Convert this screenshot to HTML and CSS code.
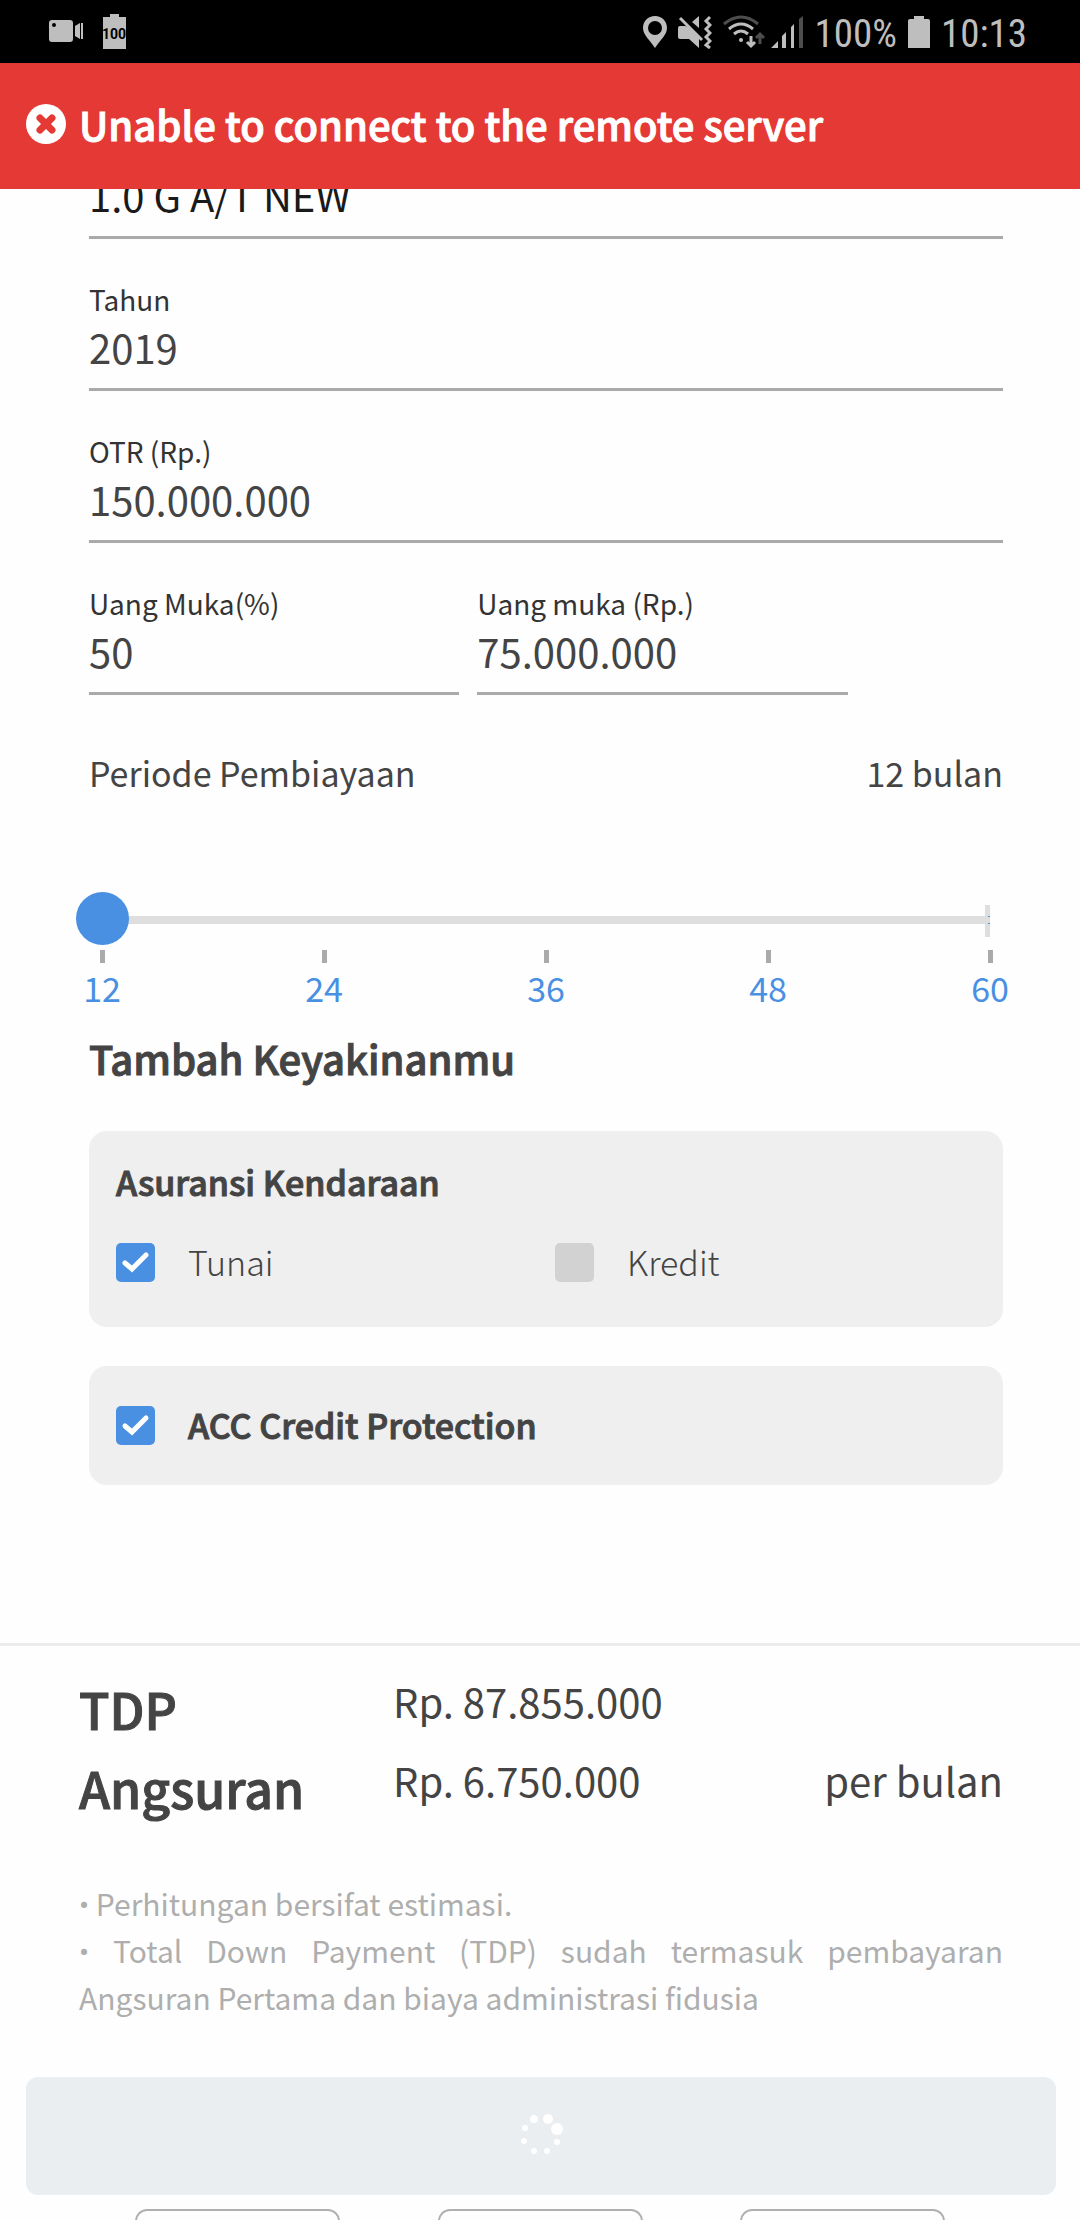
FILE: index.html
```html
<!DOCTYPE html>
<html lang="id">
<head>
<meta charset="utf-8">
<meta name="viewport" content="width=device-width, initial-scale=1">
<title>Simulasi Kredit</title>
<link rel="stylesheet" href="styles.css">
</head>
<body>
<div class="screen">
  <header class="top">
    <div class="status">
      <svg class="camera" width="36" height="36" viewBox="0 0 36 36" fill="#bebebe"><path fill-rule="evenodd" d="M4 6h18a3 3 0 0 1 3 3v16a3 3 0 0 1-3 3H4a3 3 0 0 1-3-3V9a3 3 0 0 1 3-3zM6 9a2 2 0 1 0 0 4a2 2 0 0 0 0-4z"/><path d="M32 9v16l-5-3V12zM33 9h2v16h-2z"/></svg>
      <svg class="charge" width="24" height="36" viewBox="0 0 24 36"><path fill="#bebebe" d="M8 0h9v3h7v32H1V3h7z"/><text x="12" y="25" class="charge-text">100</text></svg>
      <span class="spacer"></span>
      <svg width="24" height="34" viewBox="0 0 24 34" fill="#bebebe"><path fill-rule="evenodd" d="M12 1C5 1 0 6 0 13c0 7 7 12 12 20c5-8 12-13 12-20c0-7-5-12-12-12zm0 5a7 7 0 1 1 0 14a7 7 0 0 1 0-14z"/></svg>
      <svg width="34" height="34" viewBox="0 0 34 34"><path fill="#bebebe" d="M2 11h5l4 1l10 11v10l-10-9H2a2 2 0 0 1-2-2v-9a2 2 0 0 1 2-2zM21 1v12l-7-6z"/><path d="M2 3l22 22" stroke="#bebebe" stroke-width="3"/><path d="M32 2l-4 4l4 4l-4 4l4 4l-4 4l4 4l-4 4l4 3" fill="none" stroke="#bebebe" stroke-width="3"/></svg>
      <span class="signals">
        <svg width="42" height="34" viewBox="0 0 42 34" fill="none" stroke="#bebebe" stroke-width="3"><path d="M1 9q17-14 34 0" stroke="#4d4d4d"/><path d="M6 14q12-10 24 0M11 19q7-6 14 0"/><circle cx="18" cy="25" r="2" fill="#bebebe" stroke="none"/><path d="M28 21v9M24 27l4 4l4-4"/><path d="M37 29v-9M33 23l4-4l4 4" stroke="#4d4d4d"/></svg>
        <svg width="32" height="34" viewBox="0 0 32 34" fill="#bebebe"><path d="M0 33l7-7v7zM11 21l4-4v16h-4zM20 12l3-3v24h-3z"/><path fill="#4d4d4d" d="M28 4l4-3v32h-4z"/></svg>
      </span>
      <span class="status-text percent">100%</span>
      <svg class="battery" width="22" height="34" viewBox="0 0 22 34"><path fill="#bebebe" d="M6 1h10v3h4a2 2 0 0 1 2 2v27H0V6a2 2 0 0 1 2-2h4z"/></svg>
      <span class="status-text">10:13</span>
    </div>
    <div class="alert" role="alert">
      <svg width="40" height="40" viewBox="0 0 40 40"><circle cx="20" cy="20" r="20" fill="#fff"/><path d="M14 14l12 12M26 14L14 26" stroke="#e53935" stroke-width="7" stroke-linecap="round"/></svg>
      <span class="bold">Unable to connect to the remote server</span>
    </div>
  </header>

  <main class="form">
    <div class="field first"><input class="strong" type="text" aria-label="Tipe" value="1.0 G A/T NEW"></div>
    <div class="field"><label for="year">Tahun</label><input id="year" type="text" value="2019"></div>
    <div class="field"><label for="otr">OTR (Rp.)</label><input id="otr" type="text" value="150.000.000"></div>
    <div class="pair">
      <div class="field"><label for="dp-pct">Uang Muka(%)</label><input id="dp-pct" type="text" value="50"></div>
      <div class="field"><label for="dp-rp">Uang muka (Rp.)</label><input id="dp-rp" type="text" value="75.000.000"></div>
    </div>
    <div class="period"><label for="tenor">Periode Pembiayaan</label><output for="tenor">12 bulan</output></div>
    <div class="slider">
      <input id="tenor" type="range" min="12" max="60" step="12" value="12">
      <span class="slider-end"></span>
    </div>
    <div class="scale"><span>12</span><span>24</span><span>36</span><span>48</span><span>60</span></div>

    <h2 class="bold">Tambah Keyakinanmu</h2>
    <fieldset class="card">
      <legend class="bold">Asuransi Kendaraan</legend>
      <div class="options">
        <label class="check"><input type="checkbox" checked><span>Tunai</span></label>
        <label class="check"><input type="checkbox"><span>Kredit</span></label>
      </div>
    </fieldset>
    <div class="card single">
      <label class="check"><input type="checkbox" checked><span class="bold">ACC Credit Protection</span></label>
    </div>
  </main>

  <section class="summary">
    <dl class="totals">
      <dt class="bold">TDP</dt><dd>Rp. 87.855.000</dd><dd></dd>
      <dt class="bold">Angsuran</dt><dd>Rp. 6.750.000</dd><dd class="unit">per bulan</dd>
    </dl>
    <div class="notes">
      <p><span class="bullet">•</span> Perhitungan bersifat estimasi.</p>
      <p><span class="bullet">•</span> Total Down Payment (TDP) sudah termasuk pembayaran Angsuran Pertama dan biaya administrasi fidusia</p>
    </div>
    <button class="submit" type="button" aria-label="Memuat" disabled>
      <svg width="44" height="44" viewBox="0 0 44 44" fill="#fff"><circle cx="15" cy="5" r="4"/><circle cx="29" cy="5" r="5"/><circle cx="38" cy="15" r="6"/><circle cx="38" cy="28" r="3"/><circle cx="28" cy="37" r="3"/><circle cx="15" cy="37" r="3"/><circle cx="5" cy="27" r="3"/><circle cx="6" cy="14" r="3"/></svg>
    </button>
  </section>
  <div class="tabs"><button type="button" aria-label="Tab 1"></button><button type="button" aria-label="Tab 2"></button><button type="button" aria-label="Tab 3"></button></div>
</div>
</body>
</html>
```
FILE: styles.css
```css
* { box-sizing: border-box; }

body {
  margin: 0;
  background: #fefefe;
  color: #444;
  font-family: "Noto Sans CJK SC", "Noto Sans", sans-serif;
  font-size: 34px;
  line-height: 48px;
}

/* Semibold: the medium cut with a thin outline */
.bold {
  font-weight: 500;
  -webkit-text-stroke: 1px currentColor;
}

.screen {
  height: 100vh;
  overflow: hidden;
}

.top {
  position: relative;
  z-index: 1;
}

.status {
  display: flex;
  align-items: center;
  height: 63px;
  padding: 0 53px 0 48px;
  background: #000;
  gap: 11px;
}

.charge { margin-left: 7px; }

.charge-text {
  font: 700 14px Roboto, sans-serif;
  text-anchor: middle;
}

.spacer { flex: 1; }

.signals {
  display: flex;
  gap: 6px;
}

.status-text {
  padding-top: 4px;
  color: #bebebe;
  font: 39px/48px "Roboto Condensed", Roboto, sans-serif;
}

.alert {
  display: flex;
  align-items: center;
  gap: 13px;
  height: 126px;
  padding: 0 26px 4px;
  background: #e53935;
  color: #fff;
  font-size: 40px;
}

.form {
  padding: 0 77px 0 89px;
}

.field {
  display: flex;
  flex-direction: column;
  height: 152px;
  padding-top: 36px;
  border-bottom: 3px solid #aaa;
}

.field.first {
  height: 50px;
  padding: 0;
  justify-content: flex-end;
}

.field label {
  color: #333;
  font-size: 28px;
  line-height: 48px;
}

.field input {
  width: 100%;
  height: 65px;
  flex: none;
  padding: 0 0 18px;
  border: 0;
  outline: 0;
  background: none;
  color: #444;
  font: inherit;
  font-size: 40px;
}

.field .strong { color: #1a1a1a; }

.pair {
  display: grid;
  grid-template-columns: 371fr 371fr;
  gap: 18px;
  padding-right: 17%;
}

.period {
  display: flex;
  justify-content: space-between;
  margin-top: 54px;
}

.slider {
  position: relative;
  height: 53px;
  margin: 95px 13px 0 -13px;
}

.slider input {
  display: block;
  width: 100%;
  height: 53px;
  margin: 0;
  appearance: none;
  background: linear-gradient(#dedede, #dedede) 26px 24px / calc(100% - 26px) 8px no-repeat;
}

.slider input::-webkit-slider-thumb {
  appearance: none;
  width: 53px;
  height: 53px;
  border-radius: 50%;
  background: #4a90e2;
}

.slider-end {
  position: absolute;
  top: 13px;
  right: 0;
  width: 5px;
  height: 32px;
  background:
    linear-gradient(#4a90e2, #4a90e2) 100% 11px / 2px 1px no-repeat,
    linear-gradient(#4a90e2, #4a90e2) 100% 18px / 2px 1px no-repeat,
    #dedede;
}

.scale {
  display: flex;
  justify-content: space-between;
  margin: 5px -17px 0;
  color: #4a90e2;
}

.scale span {
  width: 60px;
  text-align: center;
}

.scale span::before {
  content: "";
  display: block;
  width: 5px;
  height: 13px;
  margin: 0 auto 1px;
  background: #aaa;
}

h2 {
  margin: 22px 0 0;
  font-size: 40px;
  line-height: 48px;
}

.card {
  margin: 49px 0 0;
  padding: 27px 27px 41px;
  border: 0;
  border-radius: 18px;
  background: #efefef;
}

.card.single {
  margin-top: 39px;
  padding: 35px 27px 36px;
}

legend {
  float: left;
  width: 100%;
  padding: 0;
}

.options {
  clear: both;
  display: grid;
  grid-template-columns: 1fr 1fr;
  column-gap: 18px;
  padding-top: 32px;
}

.check {
  display: flex;
  align-items: center;
  gap: 33px;
  font-weight: 300;
}

.check input {
  width: 39px;
  height: 39px;
  margin: 0;
  appearance: none;
  border-radius: 5px;
  background: #d2d2d2;
}

.check input:checked {
  background: #4a90e2 url("data:image/svg+xml,%3Csvg xmlns='http://www.w3.org/2000/svg' viewBox='0 0 39 39'%3E%3Cpath d='M9 20l7 6l14-14' fill='none' stroke='white' stroke-width='5' stroke-linecap='round'/%3E%3C/svg%3E");
}

.summary {
  margin-top: 158px;
  padding: 23px 24px 14px 26px;
  border-top: 3px solid #ebebeb;
}

.totals {
  display: grid;
  grid-template-columns: 314px 1fr auto;
  margin: 0 53px;
  font-size: 40px;
  line-height: 65px;
}

.totals dt {
  font-size: 50px;
  line-height: 79px;
}

.totals dd { margin: 0; }

.notes {
  margin: 53px 53px 0;
  color: #aeaeae;
  font-size: 30px;
  line-height: 47px;
  text-align: justify;
}

.notes p { margin: 0; }

.bullet {
  font-family: Roboto, sans-serif;
  line-height: 1;
}

.submit {
  display: flex;
  align-items: center;
  justify-content: center;
  width: 100%;
  height: 118px;
  margin-top: 56px;
  border: 0;
  border-radius: 12px;
  background: #eaeef1;
}

.tabs {
  display: grid;
  grid-template-columns: repeat(3, 205px);
  justify-content: space-between;
  padding: 0 135px;
}

.tabs button {
  height: 80px;
  border: 2px solid #b0b0b0;
  border-radius: 12px;
  background: none;
}
```
